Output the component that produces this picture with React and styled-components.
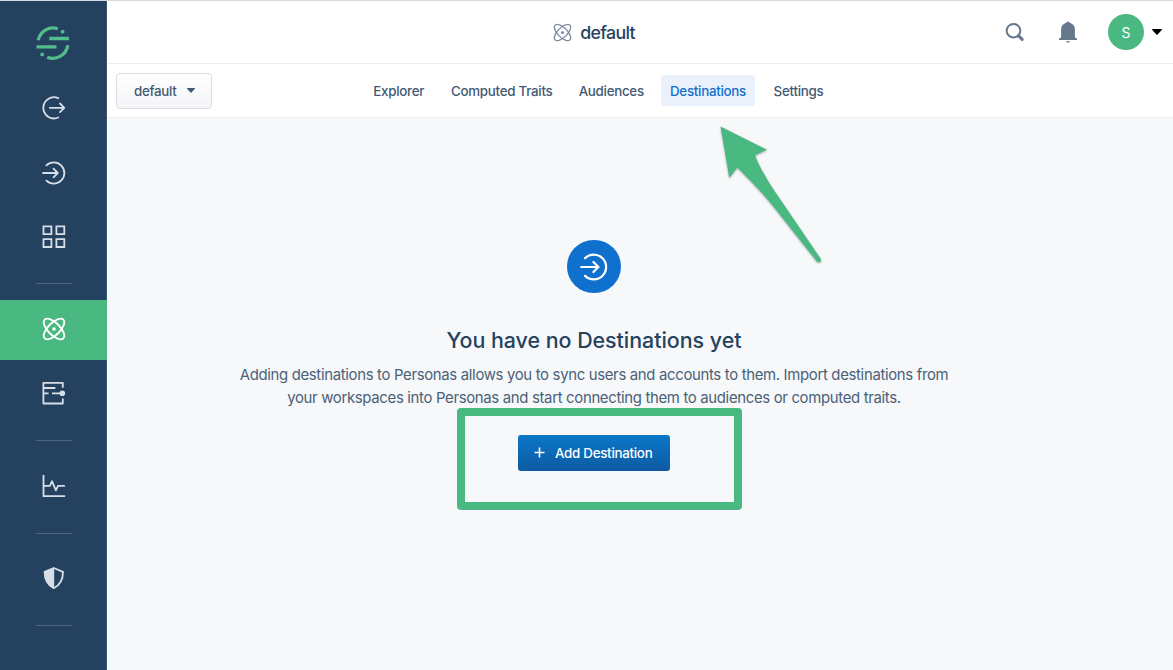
import React from 'react';
import styled, { createGlobalStyle } from 'styled-components';

const GlobalStyle = createGlobalStyle`
  *, *::before, *::after { box-sizing: border-box; }
  body {
    margin: 0;
    font-family: Inter, 'Liberation Sans', sans-serif;
    -webkit-font-smoothing: antialiased;
    background: #f7f8fa;
  }
  button { font: inherit; cursor: pointer; }
`;

const green = '#49b881';
const navy = '#25425f';

const Page = styled.div`
  display: flex;
  height: 670px;
  overflow: hidden;
  border-top: 1px solid #d9dadf;
`;

const Sidebar = styled.nav`
  flex: 0 0 107px;
  display: flex;
  flex-direction: column;
  align-items: center;
  background: #24425f;
  color: #d7dee6;
  box-shadow: inset -1px 0 #385572;
`;

const LogoLink = styled.a`
  display: flex;
  height: 77px;
  padding: 24px 1px 0 0;
`;

const NavGroup = styled.div`
  width: 100%;
  display: flex;
  flex-direction: column;
  gap: 4.5px;
`;

const NavItem = styled.a`
  height: 60px;
  display: flex;
  align-items: center;
  justify-content: center;
  padding-bottom: ${(p) => (p.$raised ? 1.2 : 0)}px;
  background: ${(p) => (p.$active ? green : 'transparent')};
  color: ${(p) => (p.$active ? '#fff' : 'inherit')};
`;

const Divider = styled.hr`
  width: 36px;
  height: 1px;
  flex: none;
  margin: 16px 0 15.5px;
  border: 0;
  background: #4c6780;
`;

const Content = styled.div`
  flex: 1;
  display: flex;
  flex-direction: column;
`;

const Header = styled.header`
  height: 63px;
  display: grid;
  grid-template-columns: 380px 214px 1fr;
  align-items: center;
  background: #fff;
  border-bottom: 1px solid #eceef0;
`;

const SpaceTitle = styled.h1`
  grid-column: 2;
  margin: 0;
  display: flex;
  align-items: center;
  justify-content: center;
  gap: 8px;
  font-size: 17.8px;
  font-weight: 500;
  letter-spacing: -0.7px;
  color: ${navy};
  svg { color: #7d8da0; }
`;

const HeaderActions = styled.div`
  display: flex;
  align-items: center;
  justify-content: flex-end;
  padding-right: 11px;
  color: #66788c;
`;

const IconButton = styled.a`
  display: flex;
  margin-right: ${(p) => p.$space}px;
`;

const Avatar = styled.div`
  width: 36px;
  height: 36px;
  border-radius: 50%;
  display: flex;
  align-items: center;
  justify-content: center;
  margin-right: 8px;
  background: ${green};
  color: #fff;
  font-size: 14px;
`;

const SubHeader = styled.div`
  height: 54px;
  flex: none;
  display: flex;
  align-items: center;
  padding-left: 9px;
  background: #fff;
  border-bottom: 1px solid #eceef0;
`;

const SpaceSelect = styled.button`
  width: 96px;
  height: 36px;
  display: flex;
  align-items: center;
  justify-content: space-between;
  padding: 0 16px 0 17px;
  border: 1px solid #d9dee3;
  border-radius: 4px;
  background: linear-gradient(#fff, #f3f4f7);
  color: #425a72;
  font-size: 13.33px;
  font-weight: 500;
  letter-spacing: -0.3px;
`;

const Tabs = styled.div`
  display: flex;
  gap: 9px;
  margin-left: 152.5px;
`;

const Tab = styled.a`
  width: ${(p) => p.$width}px;
  height: 31px;
  display: flex;
  align-items: center;
  justify-content: center;
  white-space: nowrap;
  border-radius: 3px;
  background: ${(p) => (p.$active ? '#eaf1fb' : 'transparent')};
  color: ${(p) => (p.$active ? '#1070ce' : '#425a72')};
  font-size: 13.33px;
  font-weight: 450;
  letter-spacing: -0.27px;
`;

const EmptyState = styled.main`
  width: 974px;
  display: flex;
  flex-direction: column;
  align-items: center;
  padding-top: 122px;
  text-align: center;
`;

const Badge = styled.div`
  width: 53.4px;
  height: 53.4px;
  border-radius: 50%;
  display: flex;
  align-items: center;
  justify-content: center;
  background: #0f70ce;
  color: #fff;
`;

const Heading = styled.h2`
  margin: 32.6px 0 0;
  font-size: 21.4px;
  line-height: 28px;
  font-weight: 500;
  letter-spacing: -0.02px;
  color: ${navy};
`;

const Description = styled.p`
  margin: 10px 0 0;
  font-size: 14.9px;
  line-height: 23px;
  letter-spacing: -0.32px;
  white-space: nowrap;
  color: #4a6178;
`;

const CallToAction = styled.div`
  position: relative;
  margin-top: 25px;
`;

const Highlight = styled.div`
  position: absolute;
  left: -61px;
  top: -27px;
  width: 285px;
  height: 102px;
  border: 8px solid ${green};
  border-radius: 4px;
  pointer-events: none;
`;

const PrimaryButton = styled.button`
  width: 152px;
  height: 36px;
  display: flex;
  align-items: center;
  padding: 0 0 0 16px;
  gap: 10px;
  border: 0;
  border-radius: 3px;
  background: linear-gradient(#0a78c8, #0e5aa2);
  color: #fff;
  font-size: 13.33px;
  font-weight: 500;
  letter-spacing: -0.27px;
  white-space: nowrap;
`;

const Pointer = styled.svg`
  position: absolute;
  left: 716px;
  top: 122px;
  filter: drop-shadow(0 1px 1px rgba(40, 60, 60, 0.4));
`;

const Icon = ({ size = 24, width = 1.8, children }) => (
  <svg width={size} height={size} viewBox="0 0 24 24" fill="none" stroke="currentColor"
    strokeWidth={width} strokeLinecap="round" strokeLinejoin="round">
    {children}
  </svg>
);

const Logo = () => (
  <svg width="36" height="36" viewBox="0 0 36 36" fill="none" stroke="#52bd8a" strokeWidth="3.3">
    <path d="M3.2 15.2A15.2 15.2 0 0 1 22.7 3.7" />
    <path d="M32.8 20.2A15.2 15.2 0 0 1 12.2 32.2" />
    <path d="M14.3 13.5H34M1.5 21.9H21.5" />
    <circle cx="27.6" cy="6.7" r="1.9" fill="#52bd8a" stroke="none" />
    <circle cx="7.2" cy="29.4" r="1.9" fill="#52bd8a" stroke="none" />
  </svg>
);

const SourcesIcon = () => (
  <Icon>
    <path d="M16.2 2.1A10.6 10.6 0 1 0 16.2 21.5M7.8 11.8H22.3M18 7.5L22.3 11.8L18 16.1" />
  </Icon>
);

const DestinationsIcon = ({ size, width }) => (
  <Icon size={size} width={width}>
    <path d="M4.4 4.4A10.6 10.6 0 1 1 4.4 19.6M1 12H15.7M11.5 7.7L15.8 12L11.5 16.3" />
  </Icon>
);

const CatalogIcon = () => (
  <Icon width={1.8}>
    <path strokeLinejoin="miter" d="M1.5 1.3H9.4V9.2H1.5ZM14.4 1.3H22.3V9.2H14.4ZM1.5 14.1H9.4V22H1.5ZM14.4 14.1H22.3V22H14.4Z" />
  </Icon>
);

const AtomIcon = ({ size, width, dot = 1.8 }) => (
  <Icon size={size} width={width}>
    <ellipse cx="12" cy="12" rx="13.2" ry="6" transform="rotate(45 12 12)" />
    <ellipse cx="12" cy="12" rx="13.2" ry="6" transform="rotate(-45 12 12)" />
    <circle cx="12" cy="12" r={dot} fill="currentColor" stroke="none" />
  </Icon>
);

const ProtocolsIcon = () => (
  <Icon width={1.8}>
    <path strokeLinecap="butt" d="M20.8 6.8V1.9H1.4V22.5H20.8V17.4M1.4 7H13.4M1.4 12.3H6.6M10 12.3H20" />
    <circle cx="20.3" cy="12.3" r="2.8" fill="currentColor" stroke="none" />
  </Icon>
);

const ActivityIcon = () => (
  <Icon width={1.8}>
    <path strokeLinecap="butt" strokeLinejoin="miter" d="M1.5 1V22.2H23.1" />
    <path strokeLinecap="butt" d="M1.5 11.9H7.9L10 7.2L13.9 16.4L16 11.9H22.9" />
  </Icon>
);

const ShieldIcon = () => (
  <Icon>
    <path strokeWidth="1.8" d="M11.8 2L21 5.9C21 13.8 17.8 19 11.8 22.2C5.8 19 2.6 13.8 2.6 5.9Z" />
    <path fill="currentColor" stroke="none" d="M12.2 2V22L11.8 22.2C5.8 19 2.6 13.8 2.6 5.9Z" />
  </Icon>
);

const Caret = ({ w = 8, h = 5 }) => (
  <svg width={w} height={h} viewBox="0 0 10 6">
    <path d="M.6 0H9.4Q10.3 .3 9.7 1L5.6 5.6Q5 6.2 4.4 5.6L.3 1Q-.3 .3 .6 0Z" fill="currentColor" />
  </svg>
);

const AccountCaret = styled.a`
  display: flex;
  color: #000;
`;

const tabs = [
  { label: 'Explorer', width: 68.5 },
  { label: 'Computed Traits', width: 119.5 },
  { label: 'Audiences', width: 81.5 },
  { label: 'Destinations', width: 94, active: true },
  { label: 'Settings', width: 69 },
];

export default function App() {
  return (
    <>
      <GlobalStyle />
      <Page>
        <Sidebar>
          <LogoLink><Logo /></LogoLink>
          <NavGroup>
            <NavItem><SourcesIcon /></NavItem>
            <NavItem><DestinationsIcon /></NavItem>
            <NavItem><CatalogIcon /></NavItem>
          </NavGroup>
          <Divider />
          <NavGroup>
            <NavItem $active $raised><AtomIcon /></NavItem>
            <NavItem $raised><ProtocolsIcon /></NavItem>
          </NavGroup>
          <Divider />
          <NavItem $raised><ActivityIcon /></NavItem>
          <Divider />
          <NavItem $raised><ShieldIcon /></NavItem>
          <Divider />
        </Sidebar>
        <Content>
          <Header>
            <SpaceTitle><AtomIcon size={19} width={1.7} dot={1.9} />default</SpaceTitle>
            <HeaderActions>
              <IconButton $space={34.5}>
                <svg width="20" height="20" viewBox="0 0 20 20" fill="none" stroke="currentColor">
                  <circle cx="8.5" cy="8.7" r="6.8" strokeWidth="2" />
                  <path d="M13.4 13.6L17.2 17.4" strokeWidth="3" strokeLinecap="round" />
                </svg>
              </IconButton>
              <IconButton $space={31}>
                <svg width="18" height="22" viewBox="0 0 18 22" fill="currentColor">
                  <path d="M7.3 1.7A1.8 1.8 0 0 1 10.7 1.7C14 2.5 15.9 5 15.9 8.4V16.6L17.6 17.2Q18 17.4 18 18V19H0V18Q0 17.4 .4 17.2L2.1 16.6V8.4C2.1 5 4 2.5 7.3 1.7Z" />
                  <path d="M6.8 20.3H11.2A2.3 2 0 0 1 6.8 20.3Z" />
                </svg>
              </IconButton>
              <Avatar>S</Avatar>
              <AccountCaret><Caret w={10} h={6} /></AccountCaret>
            </HeaderActions>
          </Header>
          <SubHeader>
            <SpaceSelect>default<Caret /></SpaceSelect>
            <Tabs>
              {tabs.map((t) => (
                <Tab key={t.label} $width={t.width} $active={t.active}>{t.label}</Tab>
              ))}
            </Tabs>
          </SubHeader>
          <EmptyState>
            <Badge><DestinationsIcon size={28} width={1.9} /></Badge>
            <Heading>You have no Destinations yet</Heading>
            <Description>
              Adding destinations to Personas allows you to sync users and accounts to them. Import destinations from
              <br />
              your workspaces into Personas and start connecting them to audiences or computed traits.
            </Description>
            <CallToAction>
              <PrimaryButton>
                <svg width="11" height="11" viewBox="0 0 11 11" stroke="currentColor" strokeWidth="1.6">
                  <path d="M5.5 .5V10.5M.5 5.5H10.5" />
                </svg>
                Add Destination
              </PrimaryButton>
              <Highlight />
            </CallToAction>
          </EmptyState>
        </Content>
      </Page>
      <Pointer width="110" height="146" viewBox="716 122 110 146">
        <path fill={green} d="M720.5 126.5L767 149.7L755 155.2C758 164 767 180 778 196L820.5 258.5C822.5 262 818.5 263.5 816.5 261L773 206C761 191 745 175 737.3 167.5L729.3 177.8Z" />
      </Pointer>
    </>
  );
}
